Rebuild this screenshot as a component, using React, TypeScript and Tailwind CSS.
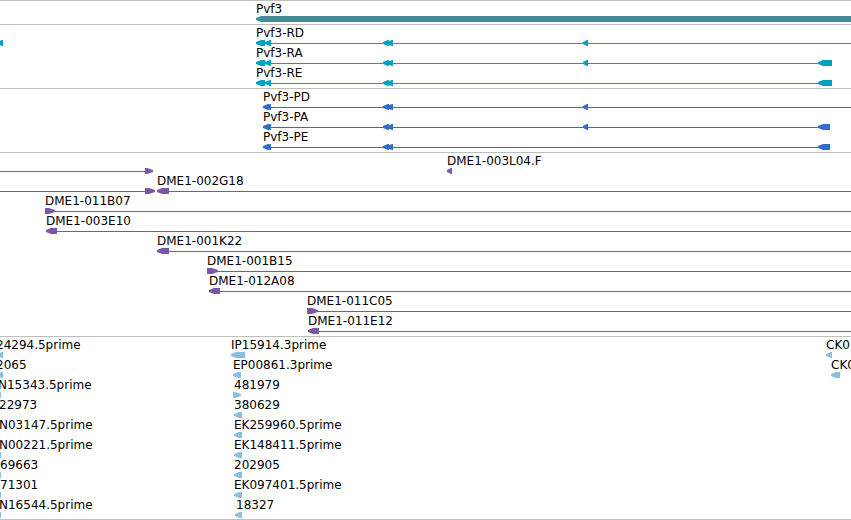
type Feature = {
  start: number;
  // left out when the feature runs past the right edge of the view
  end?: number;
  direction?: "left" | "right";
};

type Label = { at: number; text: string };

type Row = {
  labels?: Label[];
  // thin connectors between features
  spans?: Feature[];
  features: Feature[];
};

interface TrackProps {
  name: string;
  color: string;
  rows: Row[];
}

const tracks: TrackProps[] = [
  {
    name: "Gene",
    color: "text-[#408e93]",
    rows: [{ labels: [{ at: 256, text: "Pvf3" }], features: [{ start: 256 }] }],
  },
  {
    name: "Transcripts",
    color: "text-[#00a0c0]",
    rows: [
      {
        labels: [{ at: 256, text: "Pvf3-RD" }],
        spans: [{ start: 262 }],
        features: [
          { start: -3, end: 3 },
          { start: 256, end: 265 },
          { start: 265, end: 271 },
          { start: 383, end: 389 },
          { start: 387, end: 393 },
          { start: 583, end: 588 },
        ],
      },
      {
        labels: [{ at: 256, text: "Pvf3-RA" }],
        spans: [{ start: 262, end: 820 }],
        features: [
          { start: 256, end: 265 },
          { start: 265, end: 271 },
          { start: 383, end: 389 },
          { start: 387, end: 393 },
          { start: 583, end: 588 },
          { start: 818, end: 832 },
        ],
      },
      {
        labels: [{ at: 256, text: "Pvf3-RE" }],
        spans: [{ start: 262, end: 820 }],
        features: [
          { start: 256, end: 265 },
          { start: 265, end: 271 },
          { start: 383, end: 389 },
          { start: 387, end: 393 },
          { start: 818, end: 832 },
        ],
      },
    ],
  },
  {
    name: "Proteins",
    color: "text-[#336ccc]",
    rows: [
      {
        labels: [{ at: 263, text: "Pvf3-PD" }],
        spans: [{ start: 266 }],
        features: [
          { start: 263, end: 269 },
          { start: 265, end: 271 },
          { start: 383, end: 389 },
          { start: 387, end: 393 },
          { start: 583, end: 588 },
        ],
      },
      {
        labels: [{ at: 263, text: "Pvf3-PA" }],
        spans: [{ start: 266, end: 820 }],
        features: [
          { start: 263, end: 269 },
          { start: 265, end: 271 },
          { start: 383, end: 389 },
          { start: 387, end: 393 },
          { start: 583, end: 588 },
          { start: 818, end: 830 },
        ],
      },
      {
        labels: [{ at: 263, text: "Pvf3-PE" }],
        spans: [{ start: 266, end: 820 }],
        features: [
          { start: 263, end: 269 },
          { start: 265, end: 271 },
          { start: 383, end: 389 },
          { start: 387, end: 393 },
          { start: 818, end: 830 },
        ],
      },
    ],
  },
  {
    name: "BAC ends",
    color: "text-[#7759a8]",
    rows: [
      {
        labels: [{ at: 447, text: "DME1-003L04.F" }],
        spans: [{ start: 0, end: 146 }],
        features: [
          { start: 145, end: 153, direction: "right" },
          { start: 447, end: 452 },
        ],
      },
      {
        labels: [{ at: 157, text: "DME1-002G18" }],
        spans: [{ start: 0, end: 146 }, { start: 168 }],
        features: [
          { start: 145, end: 155, direction: "right" },
          { start: 157, end: 169 },
        ],
      },
      {
        labels: [{ at: 45, text: "DME1-011B07" }],
        spans: [{ start: 50 }],
        features: [{ start: 45, end: 55, direction: "right" }],
      },
      {
        labels: [{ at: 46, text: "DME1-003E10" }],
        spans: [{ start: 56 }],
        features: [{ start: 46, end: 57 }],
      },
      {
        labels: [{ at: 157, text: "DME1-001K22" }],
        spans: [{ start: 168 }],
        features: [{ start: 157, end: 169 }],
      },
      {
        labels: [{ at: 207, text: "DME1-001B15" }],
        spans: [{ start: 212 }],
        features: [{ start: 207, end: 218, direction: "right" }],
      },
      {
        labels: [{ at: 209, text: "DME1-012A08" }],
        spans: [{ start: 219 }],
        features: [{ start: 209, end: 220 }],
      },
      {
        labels: [{ at: 307, text: "DME1-011C05" }],
        spans: [{ start: 312 }],
        features: [{ start: 307, end: 318, direction: "right" }],
      },
      {
        labels: [{ at: 308, text: "DME1-011E12" }],
        spans: [{ start: 318 }],
        features: [{ start: 308, end: 319 }],
      },
    ],
  },
  {
    name: "ESTs",
    color: "text-[#8abfdf]",
    rows: [
      {
        labels: [
          { at: -4, text: "24294.5prime" },
          { at: 231, text: "IP15914.3prime" },
          { at: 826, text: "CK0" },
        ],
        features: [
          { start: -3, end: 3 },
          { start: 231, end: 245 },
          { start: 826, end: 832 },
        ],
      },
      {
        labels: [
          { at: -4, text: "2065" },
          { at: 233, text: "EP00861.3prime" },
          { at: 831, text: "CK0" },
        ],
        features: [
          { start: -3, end: 3 },
          { start: 233, end: 241 },
          { start: 831, end: 840 },
        ],
      },
      {
        labels: [
          { at: -2, text: "N15343.5prime" },
          { at: 234, text: "481979" },
        ],
        features: [
          { start: -7, end: 1 },
          { start: 233, end: 241, direction: "right" },
        ],
      },
      {
        labels: [
          { at: -1, text: "22973" },
          { at: 234, text: "380629" },
        ],
        features: [{ start: 234, end: 242 }],
      },
      {
        labels: [
          { at: -1, text: "N03147.5prime" },
          { at: 234, text: "EK259960.5prime" },
        ],
        features: [{ start: 234, end: 242 }],
      },
      {
        labels: [
          { at: -1, text: "N00221.5prime" },
          { at: 234, text: "EK148411.5prime" },
        ],
        features: [
          { start: -7, end: 1 },
          { start: 234, end: 242 },
        ],
      },
      {
        labels: [
          { at: 0, text: "69663" },
          { at: 234, text: "202905" },
        ],
        features: [
          { start: -7, end: 1 },
          { start: 234, end: 242 },
        ],
      },
      {
        labels: [
          { at: 0, text: "71301" },
          { at: 234, text: "EK097401.5prime" },
        ],
        features: [
          { start: -7, end: 1 },
          { start: 234, end: 242 },
        ],
      },
      {
        labels: [
          { at: -1, text: "N16544.5prime" },
          { at: 236, text: "18327" },
        ],
        features: [
          { start: -7, end: 1 },
          { start: 235, end: 242 },
        ],
      },
    ],
  },
];

// Arrow-shaped block whose head points along the strand
const arrowPath = ({ start, end = 0, direction = "left" }: Feature) => {
  const head = Math.min(6, end - start);
  if (direction === "right") {
    return `M${start} 0H${end - head}L${end} 2V4L${end - head} 6H${start}Z`;
  }
  return `M${start} 2L${start + head - 1} 0H${end}V6H${start + head - 1}L${start} 4Z`;
};

const FeatureShape = ({ feature }: { feature: Feature }) => {
  if (feature.end === undefined) {
    return (
      <>
        <path d={arrowPath({ start: feature.start, end: feature.start + 6 })} />
        <rect x={feature.start + 5} y="0" width="100%" height="6" />
      </>
    );
  }
  return <path d={arrowPath(feature)} />;
};

const TrackRow = ({ labels = [], spans = [], features }: Row) => (
  <div className="relative flex h-5 flex-col">
    <div className="h-3.5">
      {labels.map((label) => (
        <span
          key={label.at}
          className="absolute top-0 whitespace-nowrap text-black"
          style={{ left: label.at }}
        >
          {label.text}
        </span>
      ))}
    </div>
    <svg className="block h-1.5 w-full" fill="currentColor" aria-hidden="true">
      {spans.map((span) => (
        <rect
          key={span.start}
          x={span.start}
          y="3"
          width={span.end === undefined ? "100%" : span.end - span.start}
          height="1"
        />
      ))}
      {features.map((feature) => (
        <FeatureShape key={feature.start} feature={feature} />
      ))}
    </svg>
  </div>
);

const Track = ({ name, color, rows }: TrackProps) => (
  <section
    aria-label={name}
    className={`border-t border-[#bebebe] pt-px pb-0.5 last:border-b last:pb-px ${color}`}
  >
    {rows.map((row, index) => (
      <TrackRow key={index} {...row} />
    ))}
  </section>
);

const App = () => {
  return (
    <main className="w-full overflow-hidden bg-white font-['DejaVu_Sans',sans-serif] text-[12px] leading-[14px]">
      {tracks.map((track) => (
        <Track key={track.name} {...track} />
      ))}
    </main>
  );
};

export default App;
